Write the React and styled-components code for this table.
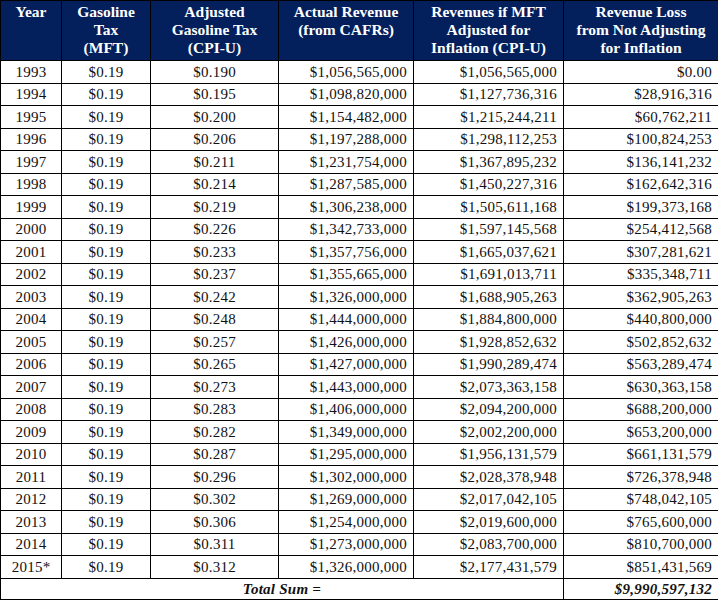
import React from 'react';
import styled, { createGlobalStyle } from 'styled-components';

const Global = createGlobalStyle`
  body {
    margin: 0;
    background: #fff;
  }
`;

const Table = styled.table`
  width: 718px;
  border-collapse: collapse;
  table-layout: fixed;
  font-family: "Liberation Serif", "DejaVu Serif", serif;
  font-size: 15px;
  color: #111;
`;

const Th = styled.th`
  background: #03205c;
  color: #fff;
  font-weight: bold;
  font-size: 15.5px;
  line-height: 18px;
  padding: 2px 2px 3px;
  vertical-align: top;
  text-align: center;
  border: 1px solid #000;
  height: 54px;
  white-space: nowrap;
`;

const Td = styled.td`
  border: 1px solid #000;
  height: 21.5px;
  padding: 0 6px 0 6px;
  text-align: ${(p) => p.align || 'center'};
  white-space: nowrap;
  line-height: 20px;
  letter-spacing: 0.25px;
`;

const TotalCell = styled(Td)`
  font-weight: bold;
  font-style: italic;
  height: 20px;
`;

const widths = [61, 89, 128, 135, 150, 155];

const rows = [
  ['1993', '$0.190', '$1,056,565,000', '$1,056,565,000', '$0.00'],
  ['1994', '$0.195', '$1,098,820,000', '$1,127,736,316', '$28,916,316'],
  ['1995', '$0.200', '$1,154,482,000', '$1,215,244,211', '$60,762,211'],
  ['1996', '$0.206', '$1,197,288,000', '$1,298,112,253', '$100,824,253'],
  ['1997', '$0.211', '$1,231,754,000', '$1,367,895,232', '$136,141,232'],
  ['1998', '$0.214', '$1,287,585,000', '$1,450,227,316', '$162,642,316'],
  ['1999', '$0.219', '$1,306,238,000', '$1,505,611,168', '$199,373,168'],
  ['2000', '$0.226', '$1,342,733,000', '$1,597,145,568', '$254,412,568'],
  ['2001', '$0.233', '$1,357,756,000', '$1,665,037,621', '$307,281,621'],
  ['2002', '$0.237', '$1,355,665,000', '$1,691,013,711', '$335,348,711'],
  ['2003', '$0.242', '$1,326,000,000', '$1,688,905,263', '$362,905,263'],
  ['2004', '$0.248', '$1,444,000,000', '$1,884,800,000', '$440,800,000'],
  ['2005', '$0.257', '$1,426,000,000', '$1,928,852,632', '$502,852,632'],
  ['2006', '$0.265', '$1,427,000,000', '$1,990,289,474', '$563,289,474'],
  ['2007', '$0.273', '$1,443,000,000', '$2,073,363,158', '$630,363,158'],
  ['2008', '$0.283', '$1,406,000,000', '$2,094,200,000', '$688,200,000'],
  ['2009', '$0.282', '$1,349,000,000', '$2,002,200,000', '$653,200,000'],
  ['2010', '$0.287', '$1,295,000,000', '$1,956,131,579', '$661,131,579'],
  ['2011', '$0.296', '$1,302,000,000', '$2,028,378,948', '$726,378,948'],
  ['2012', '$0.302', '$1,269,000,000', '$2,017,042,105', '$748,042,105'],
  ['2013', '$0.306', '$1,254,000,000', '$2,019,600,000', '$765,600,000'],
  ['2014', '$0.311', '$1,273,000,000', '$2,083,700,000', '$810,700,000'],
  ['2015*', '$0.312', '$1,326,000,000', '$2,177,431,579', '$851,431,569'],
];

export default function App() {
  return (
    <>
      <Global />
      <Table>
        <colgroup>
          {widths.map((w, i) => (
            <col key={i} style={{ width: w }} />
          ))}
        </colgroup>
        <thead>
          <tr>
            <Th>Year</Th>
            <Th>Gasoline<br />Tax<br />(MFT)</Th>
            <Th>Adjusted<br />Gasoline Tax<br />(CPI-U)</Th>
            <Th>Actual Revenue<br />(from CAFRs)</Th>
            <Th>Revenues if MFT<br />Adjusted for<br />Inflation (CPI-U)</Th>
            <Th>Revenue Loss<br />from Not Adjusting<br />for Inflation</Th>
          </tr>
        </thead>
        <tbody>
          {rows.map(([year, adj, actual, ifAdj, loss]) => (
            <tr key={year}>
              <Td>{year}</Td>
              <Td>$0.19</Td>
              <Td>{adj}</Td>
              <Td align="right">{actual}</Td>
              <Td align="right">{ifAdj}</Td>
              <Td align="right">{loss}</Td>
            </tr>
          ))}
          <tr>
            <TotalCell colSpan={5}>Total Sum =</TotalCell>
            <TotalCell align="right">$9,990,597,132</TotalCell>
          </tr>
        </tbody>
      </Table>
    </>
  );
}
